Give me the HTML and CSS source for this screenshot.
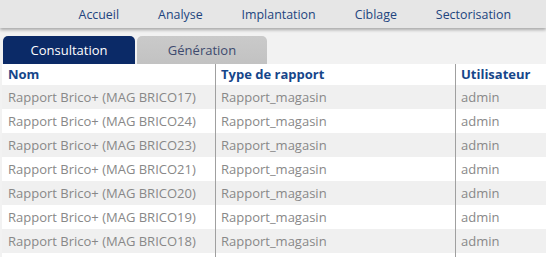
FILE: index.html
```html
<!DOCTYPE html>
<html lang="fr">
<head>
<meta charset="utf-8">
<title>Rapports</title>
<link rel="stylesheet" href="styles.css">
</head>
<body>
<nav class="topnav">
  <a class="nav-item">Accueil</a>
  <a class="nav-item">Analyse</a>
  <a class="nav-item">Implantation</a>
  <a class="nav-item">Ciblage</a>
  <a class="nav-item">Sectorisation</a>
</nav>
<div class="tabs">
  <div class="tab tab-active">Consultation</div>
  <div class="tab tab-inactive">Génération</div>
</div>
<div class="grid">
  <div class="row head"><div class="c c1">Nom</div><div class="c c2">Type de rapport</div><div class="c c3">Utilisateur</div></div>
  <div class="row odd"><div class="c c1">Rapport Brico+ (MAG BRICO17)</div><div class="c c2">Rapport_magasin</div><div class="c c3">admin</div></div>
  <div class="row even"><div class="c c1">Rapport Brico+ (MAG BRICO24)</div><div class="c c2">Rapport_magasin</div><div class="c c3">admin</div></div>
  <div class="row odd"><div class="c c1">Rapport Brico+ (MAG BRICO23)</div><div class="c c2">Rapport_magasin</div><div class="c c3">admin</div></div>
  <div class="row even"><div class="c c1">Rapport Brico+ (MAG BRICO21)</div><div class="c c2">Rapport_magasin</div><div class="c c3">admin</div></div>
  <div class="row odd"><div class="c c1">Rapport Brico+ (MAG BRICO20)</div><div class="c c2">Rapport_magasin</div><div class="c c3">admin</div></div>
  <div class="row even"><div class="c c1">Rapport Brico+ (MAG BRICO19)</div><div class="c c2">Rapport_magasin</div><div class="c c3">admin</div></div>
  <div class="row odd"><div class="c c1">Rapport Brico+ (MAG BRICO18)</div><div class="c c2">Rapport_magasin</div><div class="c c3">admin</div></div>
  <div class="row even"><div class="c c1"></div><div class="c c2"></div><div class="c c3"></div></div>
</div>
</body>
</html>
```
FILE: styles.css
```css
html, body {
  margin: 0;
  padding: 0;
  height: 100%;
  overflow: hidden;
}
body {
  background: #f2f2f2;
  font-family: "Open Sans", "Liberation Sans", sans-serif;
  font-size: 13px;
}
.topnav {
  height: 28px;
  background: #e6e6e6;
  box-shadow: 0 2px 3px rgba(0, 0, 0, 0.3);
  display: flex;
  justify-content: flex-end;
  padding-right: 15.5px;
  position: relative;
}
.nav-item {
  line-height: 30px;
  font-size: 12.4px;
  padding: 0 19.5px;
  color: #22447e;
}
.tabs {
  display: flex;
  gap: 2px;
  padding: 8px 0 0 3px;
}
.tab {
  height: 28px;
  line-height: 28px;
  text-align: center;
  border-radius: 5px 5px 0 0;
}
.tab-active {
  width: 132px;
  background: #0b2a67;
  color: #ffffff;
}
.tab-inactive {
  width: 130px;
  background: linear-gradient(#cacaca, #c2c2c2);
  color: #3d4a6e;
}
.grid {
  margin-left: 2px;
  display: flex;
  flex-direction: column;
}
.row {
  display: grid;
  grid-template-columns: 213px 240px 1fr;
  height: 24px;
  line-height: 24px;
  color: #888888;
  white-space: nowrap;
}
.row.head {
  height: 21px;
  line-height: 21px;
  font-weight: bold;
  color: #16468a;
  background: #ffffff;
}
.row.odd { background: #f0f0f0; }
.row.even { background: #ffffff; }
.c { overflow: hidden; }
.c1 { padding-left: 6px; }
.c2, .c3 {
  border-left: 1px solid #a0a0a0;
  padding-left: 5px;
}
```
